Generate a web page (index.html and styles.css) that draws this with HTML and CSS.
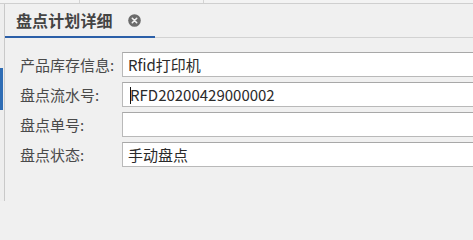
FILE: index.html
```html
<!DOCTYPE html>
<html lang="zh-CN">
<head>
<meta charset="utf-8">
<title>盘点计划详细</title>
<link rel="stylesheet" href="styles.css">
</head>
<body>
<div class="topbar">
  <div class="tb-cell tb-a"></div>
  <div class="tb-cell tb-b"></div>
  <div class="tb-cell tb-c"></div>
</div>
<div class="main">
  <div class="leftstrip"><div class="leftmark"></div></div>
  <div class="content">
    <div class="tabs">
      <div class="tab active">
        <span class="tab-title">盘点计划详细</span>
        <span class="tab-close">
          <svg width="13" height="13" viewBox="0 0 13 13">
            <circle cx="6.5" cy="6.5" r="6.3" fill="#6b6b6b"/>
            <path d="M4.3 4.3 L8.7 8.7 M8.7 4.3 L4.3 8.7" stroke="#f2f2f2" stroke-width="1.6" stroke-linecap="round"/>
          </svg>
        </span>
      </div>
    </div>
    <div class="form">
      <div class="row">
        <label class="lbl">产品库存信息:</label>
        <div class="field">Rfid打印机</div>
      </div>
      <div class="row">
        <label class="lbl">盘点流水号:</label>
        <div class="field"><span class="caret"></span>RFD20200429000002</div>
      </div>
      <div class="row">
        <label class="lbl">盘点单号:</label>
        <div class="field"></div>
      </div>
      <div class="row">
        <label class="lbl">盘点状态:</label>
        <div class="field">手动盘点</div>
      </div>
    </div>
  </div>
</div>
</body>
</html>
```
FILE: styles.css
```css
html, body {
  margin: 0;
  padding: 0;
  width: 473px;
  height: 201px;
  overflow: hidden;
  background: #f0f0f0;
  font-family: "Noto Sans CJK SC", "Noto Sans", sans-serif;
}

.topbar {
  display: flex;
  height: 3px;
  border-bottom: 1px solid #cfcfcf;
  background: #f3f3f3;
}
.tb-cell {
  height: 3px;
  border-right: 1px solid #d4d4d4;
}
.tb-a { width: 79px; }
.tb-b { width: 123px; }
.tb-c { flex: 1; border-right: none; }

.main {
  display: flex;
  height: 197px;
}

.leftstrip {
  width: 4px;
  border-right: 1px solid #c9c9c9;
  background: #eeeeee;
}
.leftmark {
  margin-top: 64px;
  width: 3px;
  height: 42px;
  background: #2f6db5;
}

.content {
  flex: 1;
  min-width: 0;
}

.tabs {
  display: flex;
  height: 33px;
  border-bottom: 1px solid #d2d2d2;
}
.tab {
  display: flex;
  align-items: center;
  width: 139px;
  padding-left: 11px;
  box-sizing: content-box;
}
.tab.active {
  border-bottom: 2px solid #2b5fa8;
  margin-bottom: -1px;
}
.tab-title {
  font-size: 16px;
  font-weight: bold;
  color: #444444;
  letter-spacing: 0.1px;
}
.tab-close {
  display: flex;
  margin-left: 15px;
  margin-top: 1px;
}

.form {
  display: flex;
  flex-direction: column;
  gap: 5px;
  padding: 14px 0 0 15px;
}
.row {
  display: flex;
  align-items: center;
  height: 25px;
}
.lbl {
  width: 102px;
  flex: none;
  font-size: 15px;
  color: #4a4a4a;
  line-height: 25px;
}
.field {
  flex: 1;
  min-width: 0;
  height: 25px;
  box-sizing: border-box;
  border: 1px solid #b9b9b9;
  border-top-color: #a8a8a8;
  border-right: none;
  background: #ffffff;
  padding-left: 5px;
  font-size: 15px;
  line-height: 23px;
  color: #2a2a2a;
  white-space: nowrap;
  overflow: hidden;
}
.caret {
  display: inline-block;
  width: 1px;
  height: 17px;
  background: #111111;
  vertical-align: -3px;
  margin-right: -1px;
  margin-left: 2px;
}
```
